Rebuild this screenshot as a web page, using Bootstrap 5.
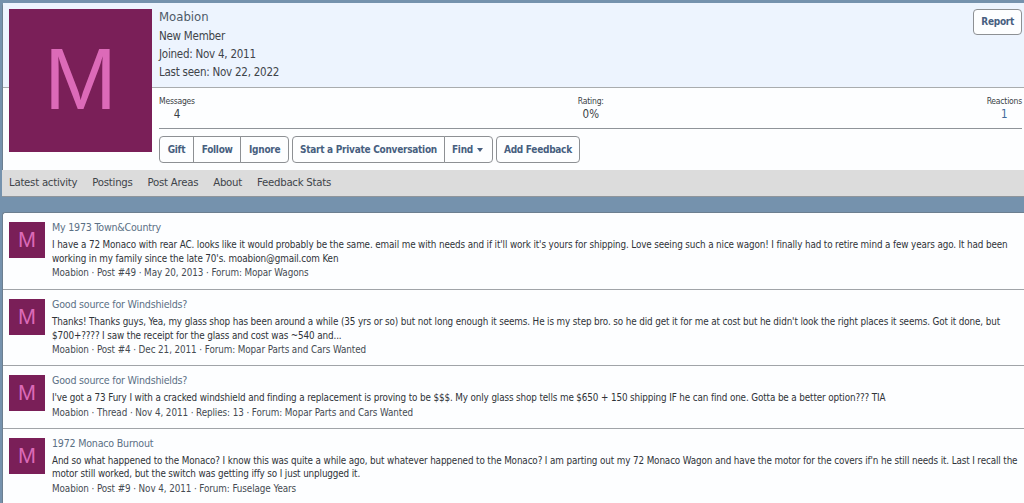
<!DOCTYPE html>
<html lang="en"><head><meta charset="utf-8"><title>Moabion</title>
<link href="https://cdn.jsdelivr.net/npm/bootstrap@5.3.0/dist/css/bootstrap.min.css" rel="stylesheet">
<style>
html,body{height:503px;overflow:hidden}
body{background:#7592ad;font-family:"DejaVu Sans Condensed","DejaVu Sans",sans-serif;font-size:12px;color:#3a3f45;padding:3px 0 0 2px}
.prof-wrap{background:#fdfeff;border-radius:3px 0 0 0;position:relative;border-left:1px solid #6c7f90}
.prof-head{background:#edf4fe;height:85px;border-bottom:1px solid #a9acae;padding:6px 2px 0 156px;display:flex;justify-content:space-between}
.uname{font-size:13px;line-height:16px;color:#4d5a68;margin-bottom:2px}
.uline{font-size:11.5px;letter-spacing:-.25px;line-height:18px;color:#3f444a}
.big-ava{position:absolute;left:6px;top:6px;width:143px;height:143px;background:#7a1f58;color:#dc6ab8;font-family:"Liberation Sans",sans-serif;font-size:87px;line-height:139px;text-align:center}
.prof-body{padding:6px 2px 7px 156px}
.stat-row{display:flex;justify-content:space-between;border-bottom:1px solid #8f9499;height:35px}
.stat-lab{font-size:8.5px;letter-spacing:-.2px;display:block;line-height:14px}
.stat-val{font-size:11.5px;display:block;text-align:center;line-height:13px}
.stat-link{color:#3f6a9a}
.act-btn{--bs-btn-font-size:10px;--bs-btn-font-weight:700;--bs-btn-color:#475f80;--bs-btn-bg:#fdfeff;--bs-btn-border-color:#8d9094;--bs-btn-padding-x:7px;--bs-btn-padding-y:0;--bs-btn-border-radius:4px;--bs-btn-hover-color:#475f80;--bs-btn-hover-bg:#edf4fe;--bs-btn-hover-border-color:#8d9094;letter-spacing:-.27px;height:27px;line-height:25px}
.grp-wide .act-btn{--bs-btn-padding-x:7.7px}
.report-btn{height:26px;line-height:24px}
.act-row{padding-top:7px;display:flex;gap:3px}
.caret-s{display:inline-block;width:0;height:0;border:3.5px solid transparent;border-top:4px solid #475f80;border-bottom:0;margin-left:4px;margin-right:2px;vertical-align:1px}
.tab-bar{background:#dcdcdc;height:27px;margin-left:-1px;border-bottom:1px solid #8f959b;padding-left:7px;display:flex;gap:15px;align-items:center;font-size:11.3px;letter-spacing:-.25px}
.tab-bar a{color:#3f444a;text-decoration:none}
.feed{margin-top:15px;background:#fdfeff;border-left:1px solid #6c7f90;border-top:1px solid #6c7f90;border-radius:3px 0 0 0;height:300px}
.feed-item{display:flex;gap:7px;padding:9px 6px 8px 6px;border-bottom:1px solid #a0a4a8}
.feed-item:first-child{padding-bottom:9px}
.feed-item:last-child{border-bottom:0}
.mini-ava{flex:none;width:36px;height:36px;background:#7a1f58;color:#dc6ab8;font-family:"Liberation Sans",sans-serif;font-size:21.5px;line-height:36px;text-align:center}
.feed-title{font-size:10.6px;letter-spacing:-.21px;line-height:11px;color:#5b7085;margin-bottom:5px}
.feed-text{font-size:9.8px;letter-spacing:-.12px;line-height:13.5px;color:#2f3338}
.feed-meta{font-size:9.8px;letter-spacing:-.09px;line-height:14px;margin-top:1px;color:#454b52}
</style></head><body>
<section class="prof-wrap">
  <div class="big-ava">M</div>
  <header class="prof-head">
    <div><div class="uname">Moabion</div><div class="uline">New Member</div><div class="uline">Joined: Nov 4, 2011</div><div class="uline">Last seen: Nov 22, 2022</div></div>
    <div><a href="#" class="btn act-btn report-btn">Report</a></div>
  </header>
  <div class="prof-body">
    <div class="stat-row">
      <div><span class="stat-lab">Messages</span><span class="stat-val">4</span></div>
      <div><span class="stat-lab">Rating:</span><span class="stat-val">0%</span></div>
      <div><span class="stat-lab">Reactions</span><span class="stat-val stat-link">1</span></div>
    </div>
    <div class="act-row">
      <div class="btn-group grp-wide"><a href="#" class="btn act-btn">Gift</a><a href="#" class="btn act-btn">Follow</a><a href="#" class="btn act-btn">Ignore</a></div>
      <div class="btn-group"><a href="#" class="btn act-btn">Start a Private Conversation</a><a href="#" class="btn act-btn">Find<span class="caret-s"></span></a></div>
      <a href="#" class="btn act-btn">Add Feedback</a>
    </div>
  </div>
  <nav class="tab-bar"><a href="#">Latest activity</a><a href="#">Postings</a><a href="#">Post Areas</a><a href="#">About</a><a href="#">Feedback Stats</a></nav>
</section>
<section class="feed">
  <article class="feed-item"><div class="mini-ava">M</div><div><div class="feed-title">My 1973 Town&amp;Country</div><div class="feed-text">I have a 72 Monaco with rear AC. looks like it would probably be the same. email me with needs and if it'll work it's yours for shipping. Love seeing such a nice wagon! I finally had to retire mind a few years ago. It had been working in my family since the late 70's. moabion@gmail.com Ken</div><div class="feed-meta">Moabion · Post #49 · May 20, 2013 · Forum: Mopar Wagons</div></div></article>
  <article class="feed-item"><div class="mini-ava">M</div><div><div class="feed-title">Good source for Windshields?</div><div class="feed-text">Thanks! Thanks guys, Yea, my glass shop has been around a while (35 yrs or so) but not long enough it seems. He is my step bro. so he did get it for me at cost but he didn't look the right places it seems. Got it done, but $700+???? I saw the receipt for the glass and cost was ~540 and...</div><div class="feed-meta">Moabion · Post #4 · Dec 21, 2011 · Forum: Mopar Parts and Cars Wanted</div></div></article>
  <article class="feed-item"><div class="mini-ava">M</div><div><div class="feed-title">Good source for Windshields?</div><div class="feed-text">I've got a 73 Fury I with a cracked windshield and finding a replacement is proving to be $$$. My only glass shop tells me $650 + 150 shipping IF he can find one. Gotta be a better option??? TIA</div><div class="feed-meta">Moabion · Thread · Nov 4, 2011 · Replies: 13 · Forum: Mopar Parts and Cars Wanted</div></div></article>
  <article class="feed-item"><div class="mini-ava">M</div><div><div class="feed-title">1972 Monaco Burnout</div><div class="feed-text">And so what happened to the Monaco? I know this was quite a while ago, but whatever happened to the Monaco? I am parting out my 72 Monaco Wagon and have the motor for the covers if'n he still needs it. Last I recall the motor still worked, but the switch was getting iffy so I just unplugged it.</div><div class="feed-meta">Moabion · Post #9 · Nov 4, 2011 · Forum: Fuselage Years</div></div></article>
</section>
<script src="https://cdn.jsdelivr.net/npm/bootstrap@5.3.0/dist/js/bootstrap.bundle.min.js"></script>
</body></html>
